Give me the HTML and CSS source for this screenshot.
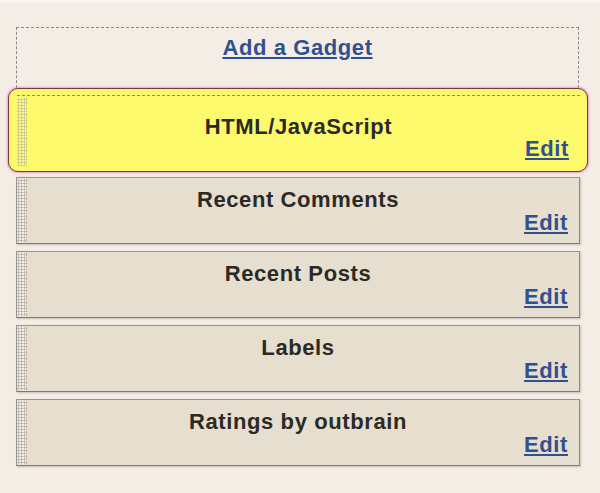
FILE: index.html
```html
<!DOCTYPE html>
<html>
<head>
<meta charset="utf-8">
<link rel="stylesheet" href="styles.css">
</head>
<body>
<div class="page">
  <div class="column">
    <div class="add-box"><a class="link" href="#">Add a Gadget</a></div>
    <div class="selected">
      <div class="widget widget-active">
        <div class="grip"></div>
        <div class="content">
          <div class="title">HTML/JavaScript</div>
          <div class="edit"><a class="link" href="#">Edit</a></div>
        </div>
      </div>
    </div>
    <div class="list">
      <div class="widget">
        <div class="grip"></div>
        <div class="content">
          <div class="title">Recent Comments</div>
          <div class="edit"><a class="link" href="#">Edit</a></div>
        </div>
      </div>
      <div class="widget">
        <div class="grip"></div>
        <div class="content">
          <div class="title">Recent Posts</div>
          <div class="edit"><a class="link" href="#">Edit</a></div>
        </div>
      </div>
      <div class="widget">
        <div class="grip"></div>
        <div class="content">
          <div class="title">Labels</div>
          <div class="edit"><a class="link" href="#">Edit</a></div>
        </div>
      </div>
      <div class="widget">
        <div class="grip"></div>
        <div class="content">
          <div class="title">Ratings by outbrain</div>
          <div class="edit"><a class="link" href="#">Edit</a></div>
        </div>
      </div>
    </div>
  </div>
</div>
</body>
</html>
```

FILE: styles.css
```css
html, body {
  margin: 0;
  padding: 0;
  background: #f3ede6;
}
body {
  font-family: "Liberation Sans", Arial, sans-serif;
  width: 600px;
  height: 493px;
  overflow: hidden;
}
.page {
  border-top: 3px solid #f8f5f1;
  padding: 24px 20px 0 16px;
}
.column {
  width: 564px;
}
.link {
  color: #31508f;
  font-weight: bold;
  font-size: 22px;
  letter-spacing: 0.6px;
  text-decoration: underline;
  text-decoration-thickness: 2px;
  text-underline-offset: 2px;
}
.add-box {
  box-sizing: border-box;
  height: 61px;
  border: 1px dashed #8a8a8a;
  border-bottom: none;
  text-align: center;
  padding-top: 8px;
  font-size: 22px;
  line-height: 24px;
  margin-right: 1px;
}
.selected {
  margin: 0 -8px;
  background: #fcfa6c;
  border: 1px solid #7d3440;
  border-radius: 10px;
  box-shadow: 0 0 2px 1px rgba(232, 130, 180, 0.7);
  padding: 6px 7px 4px 8px;
}
.list {
  display: flex;
  flex-direction: column;
  gap: 7px;
  margin-top: 5px;
}
.widget {
  display: grid;
  grid-template-columns: 10px 1fr;
  background: #e6dece;
  border: 1px solid #959595;
  border-bottom-color: #7a7a7a;
  border-right-color: #8a8a8a;
  box-shadow: 1px 1px 2px rgba(0, 0, 0, 0.2);
}
.widget-active {
  background: #fcfa6c;
  border: none;
  border-top: 1px dashed #8a8a70;
  box-shadow: none;
}
.grip {
  background-color: #f1ede6;
  background-image: radial-gradient(circle, #b4aea2 0.9px, transparent 1.2px);
  background-size: 3px 3px;
  border-right: 1px dotted #a8a298;
  margin: 1px 0;
}
.widget-active .grip {
  background-color: #f7f4a0;
  background-image: radial-gradient(circle, #c8c480 0.9px, transparent 1.2px);
  border-right-color: #c0bc80;
  margin-top: 2px;
}
.content {
  padding: 10px 11px 8px 0;
}
.widget-active .content {
  padding: 19px 11px 6px 0;
}
.title {
  text-align: center;
  font-weight: bold;
  font-size: 22px;
  letter-spacing: 0.6px;
  line-height: 24px;
  color: #2b2a26;
  margin-right: -1px;
}
.edit {
  text-align: right;
  font-size: 22px;
  line-height: 24px;
  margin-top: -1px;
}
.widget-active .edit {
  margin-top: -2px;
}
```
